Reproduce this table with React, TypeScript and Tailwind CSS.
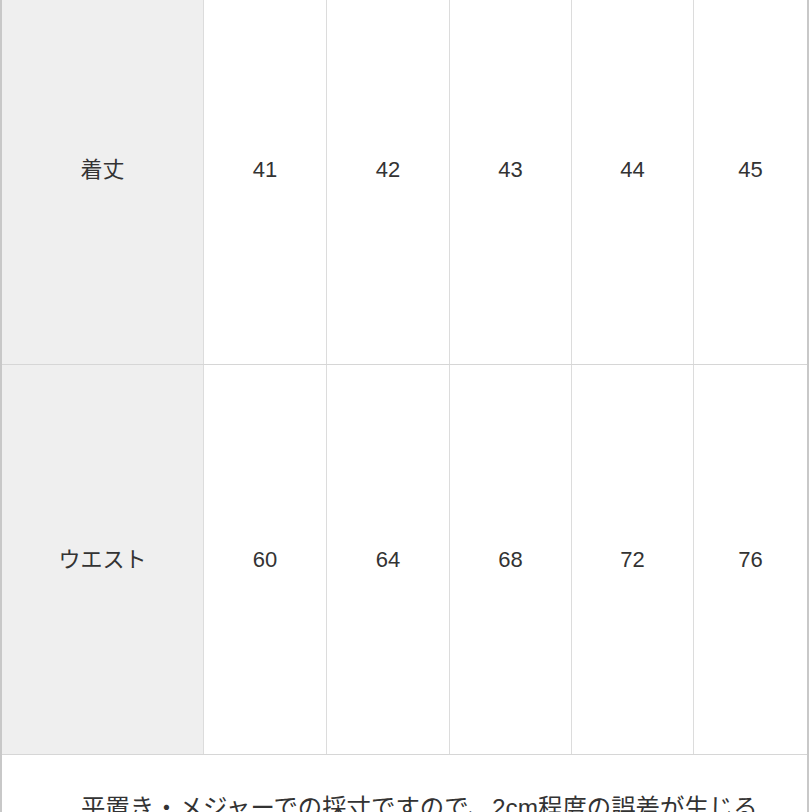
import React from "react";

const font = { fontFamily: '"Liberation Sans", "Noto Sans CJK JP", sans-serif' };

function Row({ label, values, height, shift }: { label: string; values: string[]; height: string; shift: boolean }) {
  const pad = shift ? "pb-[25px]" : "";
  return (
    <div className={`grid grid-cols-[201px_123px_123px_122px_122px_114px] shrink-0 ${height}`}>
      <div className={`flex items-center justify-center bg-[#efefef] ${pad}`}>
        <span className="text-[22px] text-[#333]">{label}</span>
      </div>
      {values.map((v, i) => (
        <div key={i} className={`flex items-center justify-center border-l border-[#dcdcdc] bg-white ${pad}`}>
          <span className="text-[22px] text-[#333]">{v}</span>
        </div>
      ))}
    </div>
  );
}

export default function App() {
  return (
    <div className="w-[812px] h-[812px] overflow-hidden bg-white" style={font}>
      <div className="w-[809px] h-[812px] border-l-2 border-r-2 border-[#c8c8c8] flex flex-col overflow-hidden">
        <Row label="着丈" values={["41", "42", "43", "44", "45"]} height="h-[364px]" shift={true} />
        <div className="border-t border-[#d6d6d6] shrink-0">
          <Row label="ウエスト" values={["60", "64", "68", "72", "76"]} height="h-[389px]" shift={false} />
        </div>
        <div className="border-t border-[#d6d6d6] pt-[38px] pl-[79px] shrink-0">
          <p className="text-[24.4px] leading-[30px] text-[#333] whitespace-nowrap">平置き・メジャーでの採寸ですので、2cm程度の誤差が生じる</p>
        </div>
      </div>
    </div>
  );
}
